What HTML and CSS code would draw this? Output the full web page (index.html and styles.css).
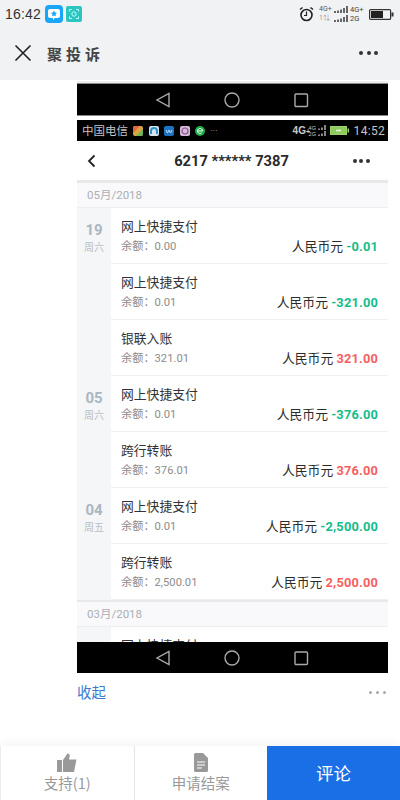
FILE: index.html
```html
<!DOCTYPE html>
<html lang="zh">
<head>
<meta charset="utf-8">
<title>聚投诉</title>
<link rel="stylesheet" href="styles.css">
</head>
<body>
<div class="page">
  <header class="top">
    <div class="status">
      <span class="clock">16:42</span>
      <svg class="app" width="18" height="18" viewBox="0 0 18 18"><rect width="18" height="18" rx="4" fill="#18a6fb"/><path d="M5 4h8a2 2 0 0 1 2 2v5a2 2 0 0 1-2 2h-3l-2 2v-2H5a2 2 0 0 1-2-2V6a2 2 0 0 1 2-2z" fill="#fff"/><path d="M9 5.500l1 2 2 .3-1.400 1.500.3 2L9 10.400l-1.900.9.3-2L6 7.800l2-.3z" fill="#18a6fb"/></svg>
      <svg class="app app2" width="16" height="16" viewBox="0 0 16 16"><rect width="16" height="16" rx="2" fill="#2dc5c0"/><path d="M3.500 5.500v-2h2.500M10 3.500h2.500v2M12.500 10.500v2H10M6 12.500H3.500v-2" fill="none" stroke="#bff" stroke-width="1"/><circle cx="8" cy="8" r="2.200" fill="none" stroke="#bff" stroke-width="1"/></svg>
      <span class="grow"></span>
      <svg class="alarm" width="15" height="16" viewBox="0 0 15 16"><circle cx="7.500" cy="9" r="5.500" fill="none" stroke="#222" stroke-width="1.600"/><path d="M7.500 5.500V9.500H5" fill="none" stroke="#222" stroke-width="1.200"/><path d="M1 3.500L3.500 1.500M14 3.500L11.500 1.500" stroke="#222" stroke-width="1.500"/></svg>
      <span class="net"><b>4G+</b><b class="faint">1⇅</b></span>
      <span class="bars">
        <svg width="15" height="7" viewBox="0 0 15 7"><path d="M1 5v2M4 4.500V7M7 3.500V7M10 2V7M13 0V7" stroke="#444" stroke-width="1.600"/></svg>
        <svg width="15" height="7" viewBox="0 0 15 7"><path d="M1 5v2M4 4.500V7M7 3.500V7M10 2V7M13 0V7" stroke="#444" stroke-width="1.600"/></svg>
      </span>
      <span class="net net2"><b>4G+</b><b>2G</b></span>
      <svg class="battery" width="25" height="11" viewBox="0 0 25 11"><rect x=".6" y=".6" width="21" height="9.800" rx="1" fill="none" stroke="#333" stroke-width="1.200"/><rect x="2" y="2" width="12" height="7" fill="#222"/><rect x="22.500" y="3.500" width="2" height="4" fill="#333"/></svg>
    </div>
    <div class="titlebar">
      <svg class="close" width="18" height="18" viewBox="0 0 18 18"><path d="M1.500 1.500L16.500 16.500M16.500 1.500L1.500 16.500" stroke="#222" stroke-width="1.600"/></svg>
      <span class="apptitle">聚投诉</span>
      <span class="grow"></span>
      <span class="dots dark"><i></i><i></i><i></i></span>
    </div>
  </header>

  <main class="shot">
    <div class="sliver"></div>
    <div class="navkeys">
      <svg width="16" height="16" viewBox="0 0 16 16"><path d="M14 1.500V14.500L2 8z" fill="none" stroke="#aaa" stroke-width="1.400"/></svg>
      <svg width="16" height="16" viewBox="0 0 16 16"><circle cx="8" cy="8" r="7" fill="none" stroke="#aaa" stroke-width="1.400"/></svg>
      <svg width="16" height="16" viewBox="0 0 16 16"><rect x="2" y="2" width="12.500" height="12.500" rx="1" fill="none" stroke="#aaa" stroke-width="1.400"/></svg>
    </div>
    <div class="thinline"></div>
    <div class="phonebar">
      <span class="carrier">中国电信</span>
      <svg class="mini" width="10" height="10" viewBox="0 0 10 10"><rect width="10" height="10" rx="2" fill="#d9a441"/><path d="M0 7L7 0H2a2 2 0 0 0-2 2z" fill="#e2683c"/><path d="M3 10L10 3v5a2 2 0 0 1-2 2z" fill="#6fb35a"/></svg>
      <svg class="mini" width="10" height="10" viewBox="0 0 10 10"><rect width="10" height="10" rx="2" fill="#d7e6ee"/><path d="M2 8V5a3 3 0 0 1 6 0v3" fill="none" stroke="#2f93c9" stroke-width="2"/></svg>
      <svg class="mini" width="10" height="10" viewBox="0 0 10 10"><rect width="10" height="10" rx="2" fill="#1c74c4"/><path d="M2 4l1.500 3L5 4l1.500 3L8 4" fill="none" stroke="#bfe0f5" stroke-width="1"/></svg>
      <svg class="mini" width="10" height="10" viewBox="0 0 10 10"><rect width="10" height="10" rx="2" fill="#d5bcd6"/><circle cx="5" cy="5" r="3" fill="none" stroke="#8e4f98" stroke-width="1.200"/></svg>
      <svg class="mini" width="10" height="10" viewBox="0 0 10 10"><circle cx="5" cy="5" r="5" fill="#1fae4a"/><path d="M2.500 5h5M7.500 5a2.500 2.500 0 1 0-.8 1.800" fill="none" stroke="#fff" stroke-width="1"/></svg>
      <span class="more">···</span>
      <span class="grow"></span>
      <span class="tiny">4G<small>+</small></span>
      <span class="tiny2">4G<br>2G</span>
      <span class="minibars">
        <svg width="9" height="5" viewBox="0 0 9 5"><path d="M1 3.500V5M4 2.500V5M7 0V5" stroke="#ccc" stroke-width="1.300"/></svg>
        <svg width="9" height="5" viewBox="0 0 9 5"><path d="M1 3.500V5M4 2.500V5M7 0V5" stroke="#ccc" stroke-width="1.300"/></svg>
      </span>
      <svg class="phonebatt" width="19" height="9" viewBox="0 0 19 9"><rect x=".5" y=".5" width="16" height="8" fill="#8ecb5c" stroke="#9ad36a"/><path d="M6 4.500h5" stroke="#e6f5d6" stroke-width="1.500"/><rect x="17.500" y="2.500" width="1.500" height="4" fill="#9ad36a"/></svg>
      <span class="phonetime">14:52</span>
    </div>
    <div class="screen">
      <div class="detailnav">
        <svg width="9" height="14" viewBox="0 0 9 14"><path d="M7.500 1.500L2 7l5.500 5.500" fill="none" stroke="#222" stroke-width="1.800"/></svg>
        <h1 class="cardno">6217 ****** 7387</h1>
        <span class="dots dark small"><i></i><i></i><i></i></span>
      </div>
      <div class="month">05月/2018</div>
      <div class="daygroup">
        <div class="date"><strong>19</strong><span>周六</span></div>
        <div class="rows">
          <div class="row"><div class="left"><div class="name">网上快捷支付</div><div class="bal">余额：0.00</div></div><div class="amt">人民币元 <b class="out">-0.01</b></div></div>
          <div class="row"><div class="left"><div class="name">网上快捷支付</div><div class="bal">余额：0.01</div></div><div class="amt">人民币元 <b class="out">-321.00</b></div></div>
          <div class="row"><div class="left"><div class="name">银联入账</div><div class="bal">余额：321.01</div></div><div class="amt">人民币元 <b class="in">321.00</b></div></div>
        </div>
      </div>
      <div class="daygroup">
        <div class="date"><strong>05</strong><span>周六</span></div>
        <div class="rows">
          <div class="row"><div class="left"><div class="name">网上快捷支付</div><div class="bal">余额：0.01</div></div><div class="amt">人民币元 <b class="out">-376.00</b></div></div>
          <div class="row"><div class="left"><div class="name">跨行转账</div><div class="bal">余额：376.01</div></div><div class="amt">人民币元 <b class="in">376.00</b></div></div>
        </div>
      </div>
      <div class="daygroup">
        <div class="date"><strong>04</strong><span>周五</span></div>
        <div class="rows">
          <div class="row"><div class="left"><div class="name">网上快捷支付</div><div class="bal">余额：0.01</div></div><div class="amt">人民币元 <b class="out">-2,500.00</b></div></div>
          <div class="row"><div class="left"><div class="name">跨行转账</div><div class="bal">余额：2,500.01</div></div><div class="amt">人民币元 <b class="in">2,500.00</b></div></div>
        </div>
      </div>
      <div class="month second">03月/2018</div>
      <div class="daygroup">
        <div class="date"></div>
        <div class="rows">
          <div class="row"><div class="left"><div class="name">网上快捷支付</div></div></div>
        </div>
      </div>
    </div>
    <div class="navkeys lower">
      <svg width="16" height="16" viewBox="0 0 16 16"><path d="M14 1.500V14.500L2 8z" fill="none" stroke="#aaa" stroke-width="1.400"/></svg>
      <svg width="16" height="16" viewBox="0 0 16 16"><circle cx="8" cy="8" r="7" fill="none" stroke="#aaa" stroke-width="1.400"/></svg>
      <svg width="16" height="16" viewBox="0 0 16 16"><rect x="2" y="2" width="12.500" height="12.500" rx="1" fill="none" stroke="#aaa" stroke-width="1.400"/></svg>
    </div>
  </main>

  <div class="collapse">
    <a class="fold">收起</a>
    <span class="dots grey"><i></i><i></i><i></i></span>
  </div>

  <footer class="bottom">
    <div class="action">
      <svg width="20" height="19" viewBox="0 0 20 19"><rect x="0" y="7" width="5" height="12" fill="#999"/><path d="M6 7L10.500 0.500C12.500 0.500 13 2 12.500 4L12 6.500H19.500L17 19H6z" fill="#999"/></svg>
      <span>支持(1)</span>
    </div>
    <div class="action">
      <svg width="14" height="19" viewBox="0 0 14 19"><path d="M1.500 0H9L14 5V17.500A1.500 1.500 0 0 1 12.500 19H1.500A1.500 1.500 0 0 1 0 17.500V1.500A1.500 1.500 0 0 1 1.500 0z" fill="#999"/><path d="M3 9H11M3 12H11M3 15H8" stroke="#fff" stroke-width="1.200"/></svg>
      <span>申请结案</span>
    </div>
    <div class="comment">评论</div>
  </footer>
</div>
</body>
</html>
```
FILE: styles.css
```css
* { box-sizing: border-box; }
html, body { margin: 0; padding: 0; background: #fff; }
body { font-family: Roboto, "Noto Sans CJK SC", sans-serif; }
.page { width: 400px; height: 800px; display: flex; flex-direction: column; overflow: hidden; background: #fff; }
.grow { flex: 1; }

.top { height: 80px; background: #f1f2f4; flex: none; }
.status { height: 28px; display: flex; align-items: center; padding: 0 6px 0 5px; }
.clock { font: 500 14px/1 "Liberation Sans", sans-serif; letter-spacing: .2px; color: #333; margin-right: 4px; }
.app2 { margin-left: 3px; }
.alarm { margin-right: 5px; }
.net { display: flex; flex-direction: column; font-size: 7px; line-height: 9px; color: #555; width: 15px; }
.net b { font-weight: 400; }
.net .faint { color: #999; }
.net2 { margin-left: 1px; color: #444; font-size: 7.500px; }
.bars { display: flex; flex-direction: column; gap: 2px; }
.bars svg { display: block; }
.battery { margin-left: 4px; }

.titlebar { height: 52px; display: flex; align-items: center; padding: 0 22px 0 14px; margin-top: -1px; }
.apptitle { font: 700 15px/1 "Noto Sans CJK SC", sans-serif; letter-spacing: 4px; color: #444; margin-left: 15px; }

.dots { display: flex; gap: 3.500px; }
.dots i { width: 4px; height: 4px; border-radius: 50%; background: #333; }
.dots.small { gap: 2.500px; }
.dots.grey { gap: 3.500px; }
.dots.grey i { width: 3.500px; height: 3.500px; background: #a9a9a9; }

.shot { width: 311px; margin-left: 77px; flex: none; }
.sliver { height: 4px; background: linear-gradient(#fff 0, #fff 1px, #eceef0 1px, #eceef0 3px, #888 3px); }
.navkeys { height: 31px; background: #000; display: flex; align-items: center; justify-content: center; gap: 53px; padding-right: 2px; }
.thinline { height: 5px; background: linear-gradient(#888 0, #888 1px, #fff 1px); }
.phonebar { height: 21px; background: #000; display: flex; align-items: center; padding: 0 3px 0 5px; color: #c6c6c6; }
.carrier { font: 400 11.500px/1 "Noto Sans CJK SC", sans-serif; margin-right: 5px; }
.mini { margin-right: 5.500px; flex: none; }
.more { font-size: 9px; color: #aaa; }
.tiny { font: 700 10px/1 "Liberation Sans", sans-serif; color: #ccc; width: 16px; }
.tiny small { font-size: 7px; }
.tiny2 { font: 400 5.500px/6px "Liberation Sans", sans-serif; color: #ccc; width: 9px; }
.minibars { display: flex; flex-direction: column; gap: 1px; margin-right: 3px; }
.minibars svg { display: block; }
.phonetime { font: 400 12px/1 Roboto, sans-serif; margin-left: 5px; letter-spacing: .3px; }

.screen { height: 501px; overflow: hidden; background: #fff; }
.detailnav { height: 39px; display: flex; align-items: center; justify-content: space-between; padding: 1px 18px 0 10px; }
.cardno { margin: 0 0 0 14px; font: 700 14.700px/1 Roboto, sans-serif; color: #2a2a2a; }
.month { height: 28px; border-top: 3px solid #e9e9ec; border-bottom: 1px solid #eeeef0; background: #f9f9fb; color: #a9afb4; font-size: 11.500px; line-height: 24px; padding-left: 10px; }
.month.second { border-top-width: 2px; height: 27px; }

.daygroup { display: flex; }
.date { width: 34px; background: #f4f6f8; display: flex; flex-direction: column; align-items: center; flex: none; padding-top: 13px; }
.date strong { font: 700 15px/18px Roboto, sans-serif; color: #a9b7c1; }
.date span { font: 400 10px/14px "Noto Sans CJK SC", sans-serif; color: #b7c0c7; margin-top: 1px; }
.rows { flex: 1; min-width: 0; }
.row { height: 56px; display: flex; justify-content: space-between; padding: 8px 10px 0 10px; border-bottom: 1px solid #f0f0f3; background: #fff; }
.name { font: 400 12.800px/20px "Noto Sans CJK SC", sans-serif; color: #333; }
.bal { font: 400 11.200px/16px Roboto, "Noto Sans CJK SC", sans-serif; color: #8c8c8c; margin-top: 3px; }
.amt { font: 400 12.800px/18px Roboto, "Noto Sans CJK SC", sans-serif; color: #2b2b2b; align-self: flex-start; margin-top: 22px; white-space: nowrap; }
.amt b { font-weight: 700; letter-spacing: .2px; }
.out { color: #14bd8b; }
.in { color: #f66060; }

.collapse { flex: 1; display: flex; align-items: center; justify-content: space-between; padding: 0 14px 34px 77px; }
.fold { font: 400 14.500px/1 "Noto Sans CJK SC", sans-serif; color: #3a7bd0; }

.bottom { height: 54px; flex: none; display: flex; box-shadow: 0 -4px 8px rgba(0,0,0,.04); }
.action { width: 133.500px; background: #fff; border-left: 1px solid #e4e4e4; display: flex; flex-direction: column; align-items: center; padding-top: 7px; color: #9a9a9a; font: 400 14.500px/18px "Noto Sans CJK SC", sans-serif; gap: 2px; }
.action:first-child { border-left-color: #ececec; }
.comment { flex: 1; background: #1a6fe6; color: #fff; font: 400 17.500px/54px "Noto Sans CJK SC", sans-serif; text-align: center; }
```
